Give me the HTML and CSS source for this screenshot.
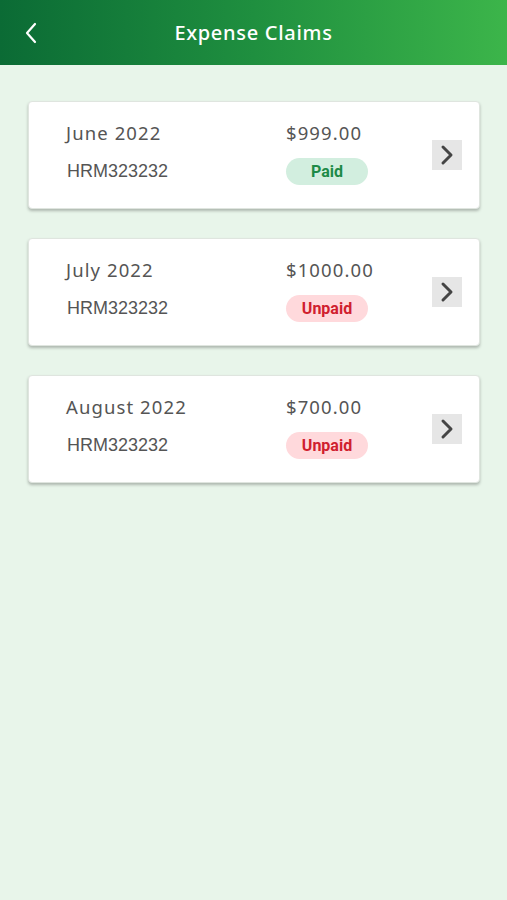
FILE: index.html
```html
<!DOCTYPE html>
<html lang="en">

<head>
    <meta charset="UTF-8">
    <meta name="viewport" content="width=device-width, initial-scale=1.0">
    <title>Expense Claims</title>
    <link rel="stylesheet" href="styles.css">
</head>

<body>
    <!-- Header -->
    <div class="app-bar">
        <div class="back-btn">
            <svg width="14" height="22" viewBox="0 0 14 22" fill="none" stroke="#fff" stroke-width="2.2" stroke-linecap="round" stroke-linejoin="round">
                <path d="M11 2 L3 11 L11 20" />
            </svg>
        </div>
        <div class="app-title">Expense Claims</div>
    </div>

    <!-- Claims list -->
    <div class="claim-list">
        <div class="claim-card">
            <div class="claim-info">
                <div class="claim-month">June 2022</div>
                <div class="claim-amount">$999.00</div>
                <div class="claim-code">HRM323232</div>
                <div class="claim-status"><span class="badge badge-paid">Paid</span></div>
            </div>
            <div class="claim-arrow">
                <svg width="16" height="22" viewBox="0 0 16 22" fill="none" stroke="#444" stroke-width="3" stroke-linecap="round" stroke-linejoin="round">
                    <path d="M4 3 L12 11 L4 19" />
                </svg>
            </div>
        </div>

        <div class="claim-card">
            <div class="claim-info">
                <div class="claim-month">July 2022</div>
                <div class="claim-amount">$1000.00</div>
                <div class="claim-code">HRM323232</div>
                <div class="claim-status"><span class="badge badge-unpaid">Unpaid</span></div>
            </div>
            <div class="claim-arrow">
                <svg width="16" height="22" viewBox="0 0 16 22" fill="none" stroke="#444" stroke-width="3" stroke-linecap="round" stroke-linejoin="round">
                    <path d="M4 3 L12 11 L4 19" />
                </svg>
            </div>
        </div>

        <div class="claim-card">
            <div class="claim-info">
                <div class="claim-month">August 2022</div>
                <div class="claim-amount">$700.00</div>
                <div class="claim-code">HRM323232</div>
                <div class="claim-status"><span class="badge badge-unpaid">Unpaid</span></div>
            </div>
            <div class="claim-arrow">
                <svg width="16" height="22" viewBox="0 0 16 22" fill="none" stroke="#444" stroke-width="3" stroke-linecap="round" stroke-linejoin="round">
                    <path d="M4 3 L12 11 L4 19" />
                </svg>
            </div>
        </div>
    </div>
</body>

</html>
```

FILE: styles.css
```css
/* Base */
body {
    margin: 0;
    min-height: 900px;
    background-color: #e8f5ea;
    font-family: 'Noto Sans', 'Liberation Sans', sans-serif;
}

/* Header */
.app-bar {
    height: 65px;
    display: flex;
    align-items: center;
    padding: 0 24px;
    background: linear-gradient(90deg, #0b6b35 0%, #1f8f3f 50%, #3cb54a 100%);
}

.back-btn {
    width: 20px;
    display: flex;
    align-items: center;
}

.app-title {
    flex: 1;
    text-align: center;
    color: #fff;
    font-size: 20px;
    font-weight: 500;
    margin-right: 20px;
    letter-spacing: 0.7px;
}

/* Cards */
.claim-list {
    display: flex;
    flex-direction: column;
    gap: 29px;
    padding: 36px 27px 0 28px;
}

.claim-card {
    background-color: #fff;
    border-radius: 4px;
    border: 1px solid #dfe5df;
    box-shadow: 0 2px 3px rgba(0, 0, 0, 0.25);
    display: flex;
    align-items: center;
    height: 106px;
    padding: 0 17px 0 37px;
}

.claim-info {
    flex: 1;
    display: grid;
    grid-template-columns: 220px auto;
    row-gap: 13px;
    align-items: center;
    margin-top: -4px;
}

.claim-month,
.claim-amount {
    font-size: 18.5px;
    color: #555;
    line-height: 24px;
    letter-spacing: 1.1px;
}

.claim-code {
    font-family: 'Liberation Sans', Arial, sans-serif;
    font-size: 18px;
    color: #555;
    padding-left: 1px;
}

.badge {
    display: inline-flex;
    justify-content: center;
    align-items: center;
    width: 82px;
    height: 27px;
    border-radius: 14px;
    font-family: Roboto, 'Liberation Sans', sans-serif;
    font-weight: bold;
    font-size: 16px;
}

.badge-paid {
    background-color: #d2eedf;
    color: #1d8a47;
}

.badge-unpaid {
    background-color: #ffd9dc;
    color: #d0202e;
}

/* Arrow button */
.claim-arrow {
    width: 30px;
    height: 30px;
    background-color: #e6e6e6;
    display: flex;
    justify-content: center;
    align-items: center;
}
```
